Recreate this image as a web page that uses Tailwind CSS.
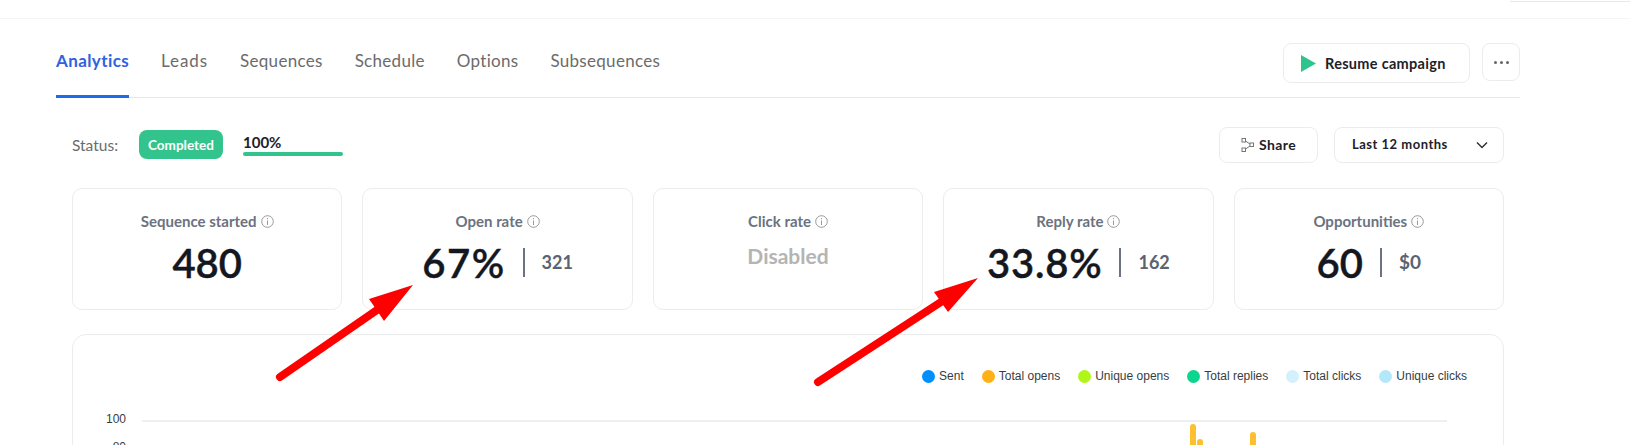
<!DOCTYPE html>
<html lang="en">
<head>
    <meta charset="UTF-8">
    <title>Campaign analytics</title>
    <script src="https://cdn.jsdelivr.net/npm/@tailwindcss/browser@4"></script>
</head>
<body class="relative h-[445px] overflow-hidden bg-white font-['Lato',sans-serif]">

    <!-- Top bar -->
    <div class="h-[19px] border-b border-[#f5f5f5] flex justify-end">
        <div class="w-[120px] h-[2px] border-b border-[#e8e8e8]"></div>
    </div>

    <div class="w-[1464px] ml-[56px]">

        <!-- Tabs -->
        <div class="h-[79px] flex border-b border-[#e8e8e8] items-start justify-between">
            <div class="flex gap-[32px] text-[17px] tracking-[0.3px] text-[#6b6b6b]">
                <a class="h-[79px] pt-[29px] border-b-[3px] border-[#1c6bea] font-bold tracking-[0.4px] text-[#2f62e0]">Analytics</a>
                <a class="pt-[29px] tracking-[0.9px]">Leads</a>
                <a class="pt-[29px]">Sequences</a>
                <a class="pt-[29px]">Schedule</a>
                <a class="pt-[29px]">Options</a>
                <a class="pt-[29px]">Subsequences</a>
            </div>
            <div class="flex gap-[12px] pt-[24px]">
                <button class="w-[187px] h-[40px] pt-[1px] border border-[#ececec] rounded-[8px] flex items-center pl-[17px] gap-[9px] text-[14.5px] font-bold tracking-[0.3px] text-[#1d2129]">
                    <svg class="w-[15px] h-[17px]" viewBox="0 0 15 17"><path d="M0 0 L15 8.5 L0 17 Z" fill="#2fc48d"/></svg>
                    Resume campaign
                </button>
                <button class="w-[38px] h-[38px] border border-[#ececec] rounded-[8px] flex items-center justify-center gap-[3px]">
                    <span class="w-[3px] h-[3px] rounded-full bg-[#666]"></span>
                    <span class="w-[3px] h-[3px] rounded-full bg-[#666]"></span>
                    <span class="w-[3px] h-[3px] rounded-full bg-[#666]"></span>
                </button>
            </div>
        </div>

        <div class="w-[1432px] ml-[16px]">

            <!-- Status row -->
            <div class="h-[90px] flex items-start justify-between pt-[29px]">
                <div class="flex items-start">
                    <span class="w-[47px] mt-[7px] text-[15.5px] text-[#6b6b6b]">Status:</span>
                    <span class="ml-[20px] w-[84px] h-[29px] mt-[3px] pt-[1px] rounded-[8px] bg-[#33c48d] text-white text-[13.5px] font-bold flex items-center justify-center">Completed</span>
                    <div class="ml-[20px] w-[100px] pt-[7px]">
                        <div class="text-[15px] leading-[17px] font-bold text-[#1d2129]">100%</div>
                        <div class="h-[4px] mt-[1px] rounded-full bg-[#33c48d]"></div>
                    </div>
                </div>
                <div class="flex gap-[16px]">
                    <button class="w-[99px] h-[36px] pb-[1px] border border-[#ececec] rounded-[8px] flex items-center justify-center gap-[5px] text-[14px] font-bold tracking-[0.4px] text-[#1d2129]">
                        <svg class="w-[13px] h-[14px]" viewBox="0 0 13 14" fill="none" stroke="#777" stroke-width="1">
                            <rect x="1" y="0.5" width="3.5" height="3.5"/><rect x="1" y="10" width="3.5" height="3.5"/><rect x="9" y="5" width="3.5" height="3.5"/>
                            <path d="M4.5 3 L9 6 M4.5 11 L9 8"/>
                        </svg>
                        Share
                    </button>
                    <button class="w-[170px] h-[36px] border border-[#ececec] rounded-[8px] flex items-center justify-between pl-[17px] pr-[15px] text-[13px] font-bold tracking-[0.5px] text-[#1d2129]">
                        Last 12 months
                        <svg class="w-[12px] h-[8px]" viewBox="0 0 12 8" fill="none" stroke="#333" stroke-width="1.5"><path d="M1 1.5 L6 6.5 L11 1.5"/></svg>
                    </button>
                </div>
            </div>

            <!-- Stat cards -->
            <div class="grid grid-cols-5 gap-[20px]">
                <div class="h-[122px] border border-[#ececec] rounded-[10px] flex flex-col items-center pt-[21px]">
                    <div class="flex items-center gap-[4px] text-[15px] font-bold text-[#6b7280]">Sequence started
                        <svg class="w-[13px] h-[13px]" viewBox="0 0 13 13" fill="none" stroke="#999"><circle cx="6.5" cy="6.5" r="5.8"/><path d="M6.5 5.5V10M6.5 3V4.2"/></svg>
                    </div>
                    <div class="mt-[7px] text-[40px] leading-[46px] font-semibold [-webkit-text-stroke:0.4px_#14171f] text-[#14171f]">480</div>
                </div>
                <div class="h-[122px] border border-[#ececec] rounded-[10px] flex flex-col items-center pt-[21px]">
                    <div class="flex items-center gap-[4px] text-[15px] font-bold text-[#6b7280]">Open rate
                        <svg class="w-[13px] h-[13px]" viewBox="0 0 13 13" fill="none" stroke="#999"><circle cx="6.5" cy="6.5" r="5.8"/><path d="M6.5 5.5V10M6.5 3V4.2"/></svg>
                    </div>
                    <div class="mt-[7px] flex items-center h-[46px]">
                        <span class="text-[40px] font-semibold tracking-[1.5px] [-webkit-text-stroke:0.4px_#14171f] text-[#14171f]">67%</span>
                        <span class="ml-[17px] w-[2px] h-[29px] bg-[#6b7280]"></span>
                        <span class="ml-[17px] text-[18px] font-bold text-[#5b6270]">321</span>
                    </div>
                </div>
                <div class="h-[122px] border border-[#ececec] rounded-[10px] flex flex-col items-center pt-[21px]">
                    <div class="flex items-center gap-[4px] text-[15px] font-bold text-[#6b7280]">Click rate
                        <svg class="w-[13px] h-[13px]" viewBox="0 0 13 13" fill="none" stroke="#999"><circle cx="6.5" cy="6.5" r="5.8"/><path d="M6.5 5.5V10M6.5 3V4.2"/></svg>
                    </div>
                    <div class="mt-[7px] text-[21px] leading-[32px] font-bold text-[#b4b4b4]">Disabled</div>
                </div>
                <div class="h-[122px] border border-[#ececec] rounded-[10px] flex flex-col items-center pt-[21px]">
                    <div class="flex items-center gap-[4px] text-[15px] font-bold text-[#6b7280]">Reply rate
                        <svg class="w-[13px] h-[13px]" viewBox="0 0 13 13" fill="none" stroke="#999"><circle cx="6.5" cy="6.5" r="5.8"/><path d="M6.5 5.5V10M6.5 3V4.2"/></svg>
                    </div>
                    <div class="mt-[7px] flex items-center h-[46px]">
                        <span class="text-[40px] font-semibold tracking-[0.8px] [-webkit-text-stroke:0.4px_#14171f] text-[#14171f]">33.8%</span>
                        <span class="ml-[17px] w-[2px] h-[29px] bg-[#6b7280]"></span>
                        <span class="ml-[17px] text-[18px] font-bold text-[#5b6270]">162</span>
                    </div>
                </div>
                <div class="h-[122px] border border-[#ececec] rounded-[10px] flex flex-col items-center pt-[21px]">
                    <div class="flex items-center gap-[4px] text-[15px] font-bold text-[#6b7280]">Opportunities
                        <svg class="w-[13px] h-[13px]" viewBox="0 0 13 13" fill="none" stroke="#999"><circle cx="6.5" cy="6.5" r="5.8"/><path d="M6.5 5.5V10M6.5 3V4.2"/></svg>
                    </div>
                    <div class="mt-[7px] flex items-center h-[46px]">
                        <span class="text-[40px] font-semibold [-webkit-text-stroke:0.4px_#14171f] text-[#14171f]">60</span>
                        <span class="ml-[17px] w-[2px] h-[29px] bg-[#6b7280]"></span>
                        <span class="ml-[17px] text-[19px] font-bold text-[#5b6270]">$0</span>
                    </div>
                </div>
            </div>

            <!-- Chart card -->
            <div class="mt-[24px] h-[200px] border border-[#ececec] rounded-[14px] font-['Liberation_Sans',sans-serif] text-[12px] text-[#373d3f]">
                <div class="flex justify-end pt-[33px] pr-[36px] h-[85px] gap-[18px]">
                    <span class="flex items-center h-[16px] gap-[4px]"><i class="w-[13px] h-[13px] rounded-full bg-[#008ffb]"></i>Sent</span>
                    <span class="flex items-center h-[16px] gap-[4px]"><i class="w-[13px] h-[13px] rounded-full bg-[#feb019]"></i>Total opens</span>
                    <span class="flex items-center h-[16px] gap-[4px]"><i class="w-[13px] h-[13px] rounded-full bg-[#b1f51b]"></i>Unique opens</span>
                    <span class="flex items-center h-[16px] gap-[4px]"><i class="w-[13px] h-[13px] rounded-full bg-[#0bd68f]"></i>Total replies</span>
                    <span class="flex items-center h-[16px] gap-[4px]"><i class="w-[13px] h-[13px] rounded-full bg-[#d3f1fc]"></i>Total clicks</span>
                    <span class="flex items-center h-[16px] gap-[4px]"><i class="w-[13px] h-[13px] rounded-full bg-[#b3e8fb]"></i>Unique clicks</span>
                </div>
                <div class="flex items-start">
                    <div class="w-[53px] text-right text-[12px] leading-[28px] -mt-[15px]">
                        <div>100</div>
                        <div>80</div>
                    </div>
                    <div class="ml-[16px] w-[1305px] h-[2px] bg-[#efefef]"></div>
                </div>
            </div>
        </div>
    </div>

    <!-- Chart spikes and annotation arrows lie over the page -->
    <svg class="absolute left-0 top-0 pointer-events-none" width="1630" height="445" viewBox="0 0 1630 445">
        <path d="M1193 450 V427 M1200 450 V442 M1253 450 V435" fill="none" stroke="#fdc02f" stroke-width="6" stroke-linecap="round"/>
        <path d="M280 377 L377 310" stroke="#ff0000" stroke-width="8" stroke-linecap="round" fill="none"/>
        <path d="M413 285 L369 299 L376 309 L384 321 Z" fill="#ff0000"/>
        <path d="M818 382 L941 302" stroke="#ff0000" stroke-width="8" stroke-linecap="round" fill="none"/>
        <path d="M978 278 L934 292 L941 302 L948 312 Z" fill="#ff0000"/>
    </svg>
</body>
</html>
